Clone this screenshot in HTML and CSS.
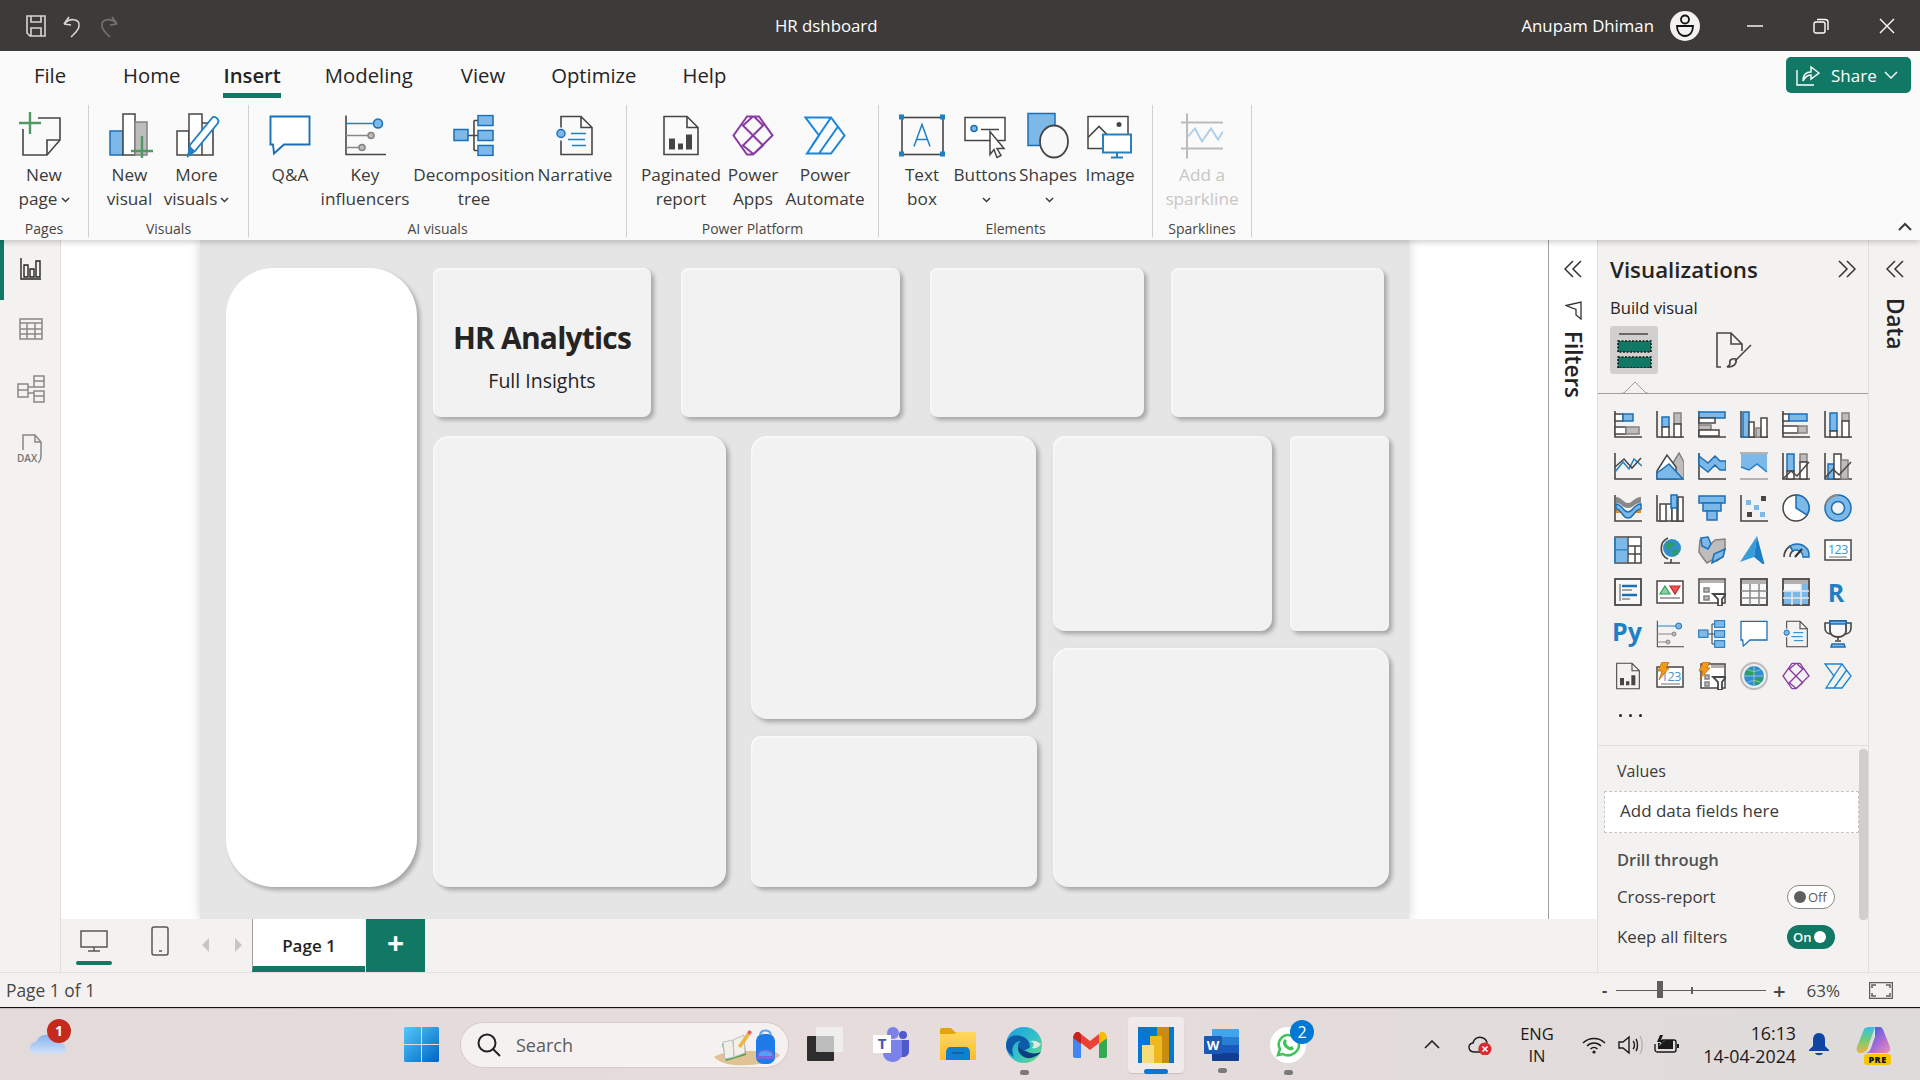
FILE: index.html
```html
<!DOCTYPE html>
<html lang="en">
<head>
  <meta charset="UTF-8">
  <title>HR dshboard - Power BI Desktop</title>
  <link rel="stylesheet" href="styles.css">
</head>
<body>

  <!-- Shared icons, sized 42 units -->
  <svg class="defs" aria-hidden="true">
    <defs>
      <linearGradient id="winGrad" x1="0" y1="0" x2="1" y2="1"><stop offset="0" stop-color="#52c9fb"/><stop offset="1" stop-color="#0064c4"/></linearGradient>
      <linearGradient id="edgeGrad" x1="0" y1="0" x2="1" y2="1"><stop offset="0" stop-color="#1b9de2"/><stop offset=".55" stop-color="#35c1c9"/><stop offset="1" stop-color="#6fe06a"/></linearGradient>
      <linearGradient id="folderGrad" x1="0" y1="0" x2="0" y2="1"><stop offset="0" stop-color="#ffd75e"/><stop offset="1" stop-color="#fbbd2e"/></linearGradient>
      <linearGradient id="cloudGrad" x1="0" y1="0" x2="0" y2="1"><stop offset="0" stop-color="#86b2ee"/><stop offset="1" stop-color="#d3e2f8"/></linearGradient>
      <linearGradient id="copGrad" x1="0" y1="0" x2="0" y2="1"><stop offset="0" stop-color="#35bfe8"/><stop offset=".5" stop-color="#72cc78"/><stop offset="1" stop-color="#efb43a"/></linearGradient>
      <linearGradient id="copGrad2" x1="0" y1="0" x2="1" y2="1"><stop offset="0" stop-color="#1a5fd6"/><stop offset=".55" stop-color="#a66ad8"/><stop offset="1" stop-color="#f58bbb"/></linearGradient>
      <symbol id="i-keyinf" viewBox="0 0 42 42">
        <path class="ax" d="M2 1V40H42"/>
        <path class="ln-b" d="M2 9H30"/><circle class="bb" cx="34" cy="9" r="4.5"/>
        <path class="ln-g" d="M2 21H24M2 33H15"/><circle class="gb" cx="27" cy="21" r="3"/><circle class="gb" cx="18" cy="33" r="3"/>
      </symbol>
      <symbol id="i-decomp" viewBox="0 0 42 42">
        <path class="ax" d="M15 21H25M21 6V36M21 6H25M21 36H25"/>
        <rect class="bb" x="1" y="15" width="14" height="11"/>
        <rect class="bb" x="25" y="1" width="15" height="10"/><rect class="bb" x="25" y="16" width="15" height="10"/><rect class="bb" x="25" y="31" width="15" height="10"/>
      </symbol>
      <symbol id="i-qa" viewBox="0 0 42 42">
        <path class="qa" d="M1.5 2H40.500V30H15L5 39 4 30H1.500Z"/>
      </symbol>
      <symbol id="i-narr" viewBox="0 0 42 42">
        <path class="ax" d="M7 13V2H27L38 13V40H7V26M27 2V13H38"/>
        <circle class="bb" cx="7" cy="19" r="4"/>
        <path class="ln-b" d="M17 19H32M14 25H31M18 31H32"/>
      </symbol>
      <symbol id="i-pag" viewBox="0 0 42 42">
        <path class="ax" d="M4 2H27L38 13V40H4ZM27 2V13H38"/>
        <path class="solid" d="M9 24H15V35H9ZM18 29H23V35H18ZM26 20H32V35H26Z"/>
      </symbol>
      <symbol id="i-apps" viewBox="0 0 42 42">
        <path class="apps" d="M15 2 1.500 21 15 40H21L40.500 21 27 2ZM21 2 11 11 31 31 21 40M22 40 11 31 31 11 22 2"/>
      </symbol>
      <symbol id="i-auto" viewBox="0 0 42 42">
        <path class="auto" d="M1.500 3H27L40.500 21 27 39H3L15 21ZM27 3 8 31M34 12 15 39"/>
      </symbol>
    </defs>
  </svg>

  <header class="titlebar">
    <div class="tb-left">
      <svg class="tb-save" width="20" height="22" viewBox="0 0 20 22"><path d="M1 1H19V21H4L1 18ZM5 1V7H15V1M5 21V13H15V21"/></svg>
      <svg class="tb-undo" width="18" height="24" viewBox="0 0 18 24"><path d="M1 10 6 3M1 10 8 11M1 10C7 3 17 5 16 12 16 16 12 19 8 23"/></svg>
      <svg class="tb-redo" width="18" height="24" viewBox="0 0 18 24"><path d="M17 10 12 3M17 10 10 11M17 10C11 3 1 5 2 12 2 16 6 19 10 23"/></svg>
    </div>
    <div class="tb-title">HR dshboard</div>
    <div class="tb-right">
      <span class="tb-user">Anupam Dhiman</span>
      <svg class="tb-avatar" width="30" height="30" viewBox="0 0 30 30"><circle class="av-bg" cx="15" cy="15" r="15"/><circle class="av-line" cx="15" cy="8.500" r="4"/><path class="av-line" d="M7 15H23C23 21 20 25 15 25 10 25 7 21 7 15Z"/></svg>
      <div class="win-btn"><svg width="16" height="16" viewBox="0 0 16 16"><path d="M0 8H16"/></svg></div>
      <div class="win-btn"><svg width="16" height="16" viewBox="0 0 16 16"><rect x="1" y="4" width="11" height="11" rx="2"/><path d="M4 1.500H12C14 1.500 15 2.500 15 4V12"/></svg></div>
      <div class="win-btn"><svg width="16" height="16" viewBox="0 0 16 16"><path d="M1 1 15 15M15 1 1 15"/></svg></div>
    </div>
  </header>

  <nav class="tabs">
    <span class="tab tab-file">File</span>
    <span class="tab tab-home">Home</span>
    <span class="tab active">Insert</span>
    <span class="tab tab-model">Modeling</span>
    <span class="tab">View</span>
    <span class="tab">Optimize</span>
    <span class="tab">Help</span>
    <button class="share">
      <svg width="24" height="22" viewBox="0 0 24 22"><path d="M1 6V21H18M7 17C7 11 10 8 15 8V3L23 9 15 15V11C11 11 9 13 7 17Z"/></svg>
      <span>Share</span>
      <svg width="14" height="8" viewBox="0 0 14 8"><path d="M1 1 7 7 13 1"/></svg>
    </button>
  </nav>

  <section class="ribbon">
    <div class="rb-group g-pages">
      <div class="rb-items">
        <div class="rb-item w-88">
          <svg class="rb-icon" width="44" height="47" viewBox="0 0 44 47"><path class="ax" d="M19 6H41V28L28 43H4V17"/><path class="ax" d="M41 28H28V43"/><path class="plus" d="M11 0V22M0 11H22"/></svg>
          <div class="rb-text">New<br>page<svg class="chev" width="9" height="6" viewBox="0 0 9 6"><path d="M1 1 4.500 4.500 8 1"/></svg></div>
        </div>
      </div>
      <div class="rb-label">Pages</div>
    </div>
    <div class="rb-group g-visuals">
      <div class="rb-items">
        <div class="rb-item w-67">
          <svg class="rb-icon shift-r" width="46" height="47" viewBox="0 0 46 47"><rect class="bb" x="1" y="19" width="13" height="24"/><rect class="wb" x="14" y="2" width="12" height="41"/><rect class="gb" x="26" y="10" width="12" height="33"/><path class="plus" d="M33 24V46M22 39H44"/></svg>
          <div class="rb-text">New<br>visual</div>
        </div>
        <div class="rb-item w-67">
          <svg class="rb-icon shift-r" width="46" height="47" viewBox="0 0 46 47"><rect class="wb" x="1" y="19" width="12" height="24"/><rect class="wb" x="13" y="2" width="13" height="41"/><path class="ax" d="M26 11H37V43H26"/><path class="pencil" d="M12 44 14 33 36 6C38 3 44 7 42 11L19 39Z"/><path class="solid-b" d="M12 44 14 34 19 39Z"/></svg>
          <div class="rb-text">More<br>visuals<svg class="chev" width="9" height="6" viewBox="0 0 9 6"><path d="M1 1 4.500 4.500 8 1"/></svg></div>
        </div>
      </div>
      <div class="rb-label">Visuals</div>
    </div>
    <div class="rb-group g-ai">
      <div class="rb-items">
        <div class="rb-item w-60"><svg class="rb-icon" width="42" height="42" viewBox="0 0 42 42"><use href="#i-qa"/></svg><div class="rb-text">Q&amp;A</div></div>
        <div class="rb-item w-90"><svg class="rb-icon" width="42" height="42" viewBox="0 0 42 42"><use href="#i-keyinf"/></svg><div class="rb-text">Key<br>influencers</div></div>
        <div class="rb-item w-128"><svg class="rb-icon" width="42" height="42" viewBox="0 0 42 42"><use href="#i-decomp"/></svg><div class="rb-text">Decomposition<br>tree</div></div>
        <div class="rb-item w-74"><svg class="rb-icon" width="42" height="42" viewBox="0 0 42 42"><use href="#i-narr"/></svg><div class="rb-text">Narrative</div></div>
      </div>
      <div class="rb-label">AI visuals</div>
    </div>
    <div class="rb-group g-power">
      <div class="rb-items">
        <div class="rb-item w-82"><svg class="rb-icon" width="42" height="42" viewBox="0 0 42 42"><use href="#i-pag"/></svg><div class="rb-text">Paginated<br>report</div></div>
        <div class="rb-item w-62"><svg class="rb-icon" width="42" height="42" viewBox="0 0 42 42"><use href="#i-apps"/></svg><div class="rb-text">Power<br>Apps</div></div>
        <div class="rb-item w-82"><svg class="rb-icon" width="42" height="42" viewBox="0 0 42 42"><use href="#i-auto"/></svg><div class="rb-text">Power<br>Automate</div></div>
      </div>
      <div class="rb-label">Power Platform</div>
    </div>
    <div class="rb-group g-elements">
      <div class="rb-items">
        <div class="rb-item w-64">
          <svg class="rb-icon" width="46" height="44" viewBox="0 0 46 44"><rect class="ax" x="3" y="4" width="41" height="37"/><path class="solid-b" d="M0 1H5V6H0ZM41 1H46V6H41ZM0 38H5V43H0ZM41 38H46V43H41Z"/><path class="ln-b" d="M15 33 23 11 31 33M18 26H28"/></svg>
          <div class="rb-text">Text<br>box</div>
        </div>
        <div class="rb-item w-62">
          <svg class="rb-icon" width="42" height="44" viewBox="0 0 42 44"><rect class="wb" x="1" y="4" width="40" height="23"/><circle class="bb" cx="10" cy="15" r="3"/><path class="ln-d" d="M17 16H35"/><path class="wb" d="M26 18V41L30 36 33 44 37 42 33 35H40Z"/></svg>
          <div class="rb-text">Buttons<br><svg class="chev" width="9" height="6" viewBox="0 0 9 6"><path d="M1 1 4.500 4.500 8 1"/></svg></div>
        </div>
        <div class="rb-item w-64">
          <svg class="rb-icon" width="42" height="46" viewBox="0 0 42 46"><rect class="bb" x="1" y="1" width="27" height="32"/><ellipse class="wb-thick" cx="27" cy="29" rx="14" ry="16"/></svg>
          <div class="rb-text">Shapes<br><svg class="chev" width="9" height="6" viewBox="0 0 9 6"><path d="M1 1 4.500 4.500 8 1"/></svg></div>
        </div>
        <div class="rb-item w-60">
          <svg class="rb-icon" width="46" height="46" viewBox="0 0 46 46"><rect class="wb" x="1" y="4" width="40" height="32"/><path class="ax" d="M1 25 12 14 22 24"/><circle class="solid" cx="32" cy="12" r="2.500"/><rect class="mon" x="16" y="22" width="28" height="18"/><path class="mon-line" d="M30 40V45M24 45H36"/></svg>
          <div class="rb-text">Image</div>
        </div>
      </div>
      <div class="rb-label">Elements</div>
    </div>
    <div class="rb-group g-spark">
      <div class="rb-items">
        <div class="rb-item w-98 disabled">
          <svg class="rb-icon" width="42" height="46" viewBox="0 0 42 46"><path class="spark-ax" d="M6 1V46M0 10H42M0 36H42"/><path class="spark-ln" d="M6 25 14 16 21 29 30 16 37 27 42 19"/></svg>
          <div class="rb-text">Add a<br>sparkline</div>
        </div>
      </div>
      <div class="rb-label">Sparklines</div>
    </div>
    <svg class="rb-collapse" width="14" height="9" viewBox="0 0 14 9"><path d="M1 8 7 2 13 8"/></svg>
  </section>

  <main class="main">
    <aside class="rail">
      <div class="rail-item current"><svg width="22" height="24" viewBox="0 0 22 24"><path class="rail-dark" d="M1 1V22H21M4 8H8V20H4ZM10 12H14V20H10ZM16 4H20V20H16Z"/></svg></div>
      <div class="rail-item table"><svg width="24" height="24" viewBox="0 0 24 24"><path class="rail-grey" d="M1 2H23V22H1ZM1 6H23M1 12H23M1 17H23M8 6V22M16 6V22"/></svg></div>
      <div class="rail-item model"><svg width="28" height="28" viewBox="0 0 28 28"><path class="rail-grey" d="M1 9H11V22H1ZM1 15H11M17 1H27V12H17ZM17 6H27M17 16H27V27H17ZM17 21H27M11 12H17M11 18H17"/></svg></div>
      <div class="rail-item model"><svg width="28" height="30" viewBox="0 0 28 30"><path class="rail-grey" d="M6 16V1H18L24 8V20C24 24 24 26 21 29M18 1V8H24"/><text class="dax" x="0" y="28">DAX</text></svg></div>
    </aside>

    <div class="canvas-col">
      <div class="canvas">
        <div class="report">
          <div class="card c-side"></div>
          <div class="report-right">
            <div class="row-top">
              <div class="card c-t1">
                <div class="kpi-title">HR Analytics</div>
                <div class="kpi-sub">Full Insights</div>
              </div>
              <div class="card c-t2"></div>
              <div class="card c-t3"></div>
              <div class="card c-t4"></div>
            </div>
            <div class="row-bottom">
              <div class="card c-big"></div>
              <div class="col-mid">
                <div class="card c-mid1"></div>
                <div class="card c-mid2"></div>
              </div>
              <div class="col-right">
                <div class="row-small">
                  <div class="card c-r1"></div>
                  <div class="card c-r2"></div>
                </div>
                <div class="card c-r3"></div>
              </div>
            </div>
          </div>
        </div>
      </div>
      <div class="page-tabs">
        <div class="view-btn selected"><svg width="28" height="22" viewBox="0 0 28 22"><path d="M1 1H27V17H1ZM14 17V21M8 21H20"/></svg></div>
        <div class="view-btn phone"><svg width="18" height="30" viewBox="0 0 18 30"><rect x="1" y="1" width="16" height="28" rx="2"/><path d="M8 25H11"/></svg></div>
        <svg class="page-arrow" width="7" height="14" viewBox="0 0 7 14"><path d="M7 0V14L0 7Z"/></svg>
        <svg class="page-arrow next" width="7" height="14" viewBox="0 0 7 14"><path d="M0 0V14L7 7Z"/></svg>
        <div class="page-tab">Page 1</div>
        <div class="page-add">+</div>
      </div>
    </div>

    <aside class="filters">
      <svg class="dbl" width="18" height="18" viewBox="0 0 18 18"><path d="M9 1 1 9 9 17M17 1 9 9 17 17"/></svg>
      <svg class="funnel" width="17" height="19" viewBox="0 0 17 19"><path d="M16 1V18L11 14V8.500L1 4.500Z"/></svg>
      <div class="vtext">Filters</div>
    </aside>

    <aside class="viz">
      <div class="viz-head">
        <span class="viz-title">Visualizations</span>
        <svg class="dbl" width="18" height="18" viewBox="0 0 18 18"><path d="M1 1 9 9 1 17M9 1 17 9 9 17"/></svg>
      </div>
      <div class="viz-sub">Build visual</div>
      <div class="viz-modes">
        <div class="mode on">
          <svg width="36" height="36" viewBox="0 0 36 36"><path class="ln-d" d="M3 2H32"/><rect class="mode-bar" x="2" y="9" width="33" height="11"/><rect class="mode-bar" x="2" y="25" width="33" height="11"/></svg>
        </div>
        <div class="mode">
          <svg width="38" height="38" viewBox="0 0 38 38"><path class="ax" d="M6 36H2V2H16L27 13V20M16 2V13H27"/><path class="ax" d="M36 14 20 30M12 36C19 36 22 33 21 28 17 27 14 29 15 32 15 34 14 35 12 36Z"/></svg>
        </div>
        <svg class="notch" width="26" height="13" viewBox="0 0 26 13"><path d="M0 12H2L13 1 24 12H26"/></svg>
      </div>

      <div class="viz-grid">
        <!-- row 1 -->
        <svg class="vi" viewBox="0 0 28 28"><path class="ax" d="M1 1V27H28"/><rect class="wb" x="1" y="4" width="8" height="7"/><rect class="bb" x="9" y="4" width="10" height="7"/><rect class="wb" x="1" y="17" width="11" height="7"/><rect class="gb" x="12" y="17" width="13" height="7"/></svg>
        <svg class="vi" viewBox="0 0 28 28"><path class="ax" d="M1 1V27H28"/><rect class="bb" x="6" y="7" width="7" height="10"/><rect class="wb" x="6" y="17" width="7" height="10"/><rect class="gb" x="18" y="3" width="7" height="11"/><rect class="wb" x="18" y="14" width="7" height="13"/></svg>
        <svg class="vi" viewBox="0 0 28 28"><path class="ax" d="M1 1V27H28"/><rect class="bb" x="1" y="2" width="26" height="6"/><rect class="wb" x="1" y="8" width="16" height="5"/><rect class="gb" x="1" y="15" width="12" height="5"/><rect class="wb" x="1" y="20" width="20" height="6"/></svg>
        <svg class="vi" viewBox="0 0 28 28"><path class="ax" d="M1 1V27H28"/><rect class="bb" x="3" y="2" width="6" height="25"/><rect class="wb" x="9" y="12" width="5" height="15"/><rect class="gb" x="16" y="18" width="5" height="9"/><rect class="wb" x="21" y="8" width="6" height="19"/></svg>
        <svg class="vi" viewBox="0 0 28 28"><path class="ax" d="M1 1V27H28"/><rect class="wb" x="1" y="4" width="6" height="7"/><rect class="bb" x="7" y="4" width="18" height="7"/><rect class="wb" x="1" y="16" width="15" height="7"/><rect class="gb" x="16" y="16" width="9" height="7"/></svg>
        <svg class="vi" viewBox="0 0 28 28"><path class="ax" d="M1 1V27H28"/><rect class="bb" x="6" y="3" width="7" height="18"/><rect class="wb" x="6" y="21" width="7" height="6"/><rect class="gb" x="18" y="3" width="7" height="8"/><rect class="wb" x="18" y="11" width="7" height="16"/></svg>
        <!-- row 2 -->
        <svg class="vi" viewBox="0 0 28 28"><path class="ax" d="M1 1V27H28"/><path class="ln-b" d="M1 20 9 10 15 17 20 7 28 14"/><path class="ln-d" d="M1 15 10 7 18 16 27 6"/></svg>
        <svg class="vi" viewBox="0 0 28 28"><path class="gb" d="M17 11 23 1 28 10V27H20Z"/><path class="wb" d="M1 19 11 3 20 15V27H1Z"/><path class="bb" d="M1 27V21L13 12 27 27Z"/></svg>
        <svg class="vi" viewBox="0 0 28 28"><path class="ax" d="M1 1V27H28"/><path class="bb" d="M1 4 10 11 17 4 22 9H28V18H22L17 13 10 20 1 13Z"/></svg>
        <svg class="vi" viewBox="0 0 28 28"><path class="gl" d="M0 1H28M0 27H28"/><path class="bb-flat" d="M1 2H27V20L17 12 9 18 1 15Z"/><path class="ln-b" d="M1 15 9 18 17 12 27 20"/></svg>
        <svg class="vi" viewBox="0 0 28 28"><path class="ax" d="M1 1V27H28"/><rect class="bb" x="5" y="2" width="7" height="17"/><rect class="wb" x="5" y="19" width="7" height="8"/><rect class="gb" x="18" y="2" width="7" height="8"/><rect class="wb" x="18" y="10" width="7" height="17"/><path class="ln-d" d="M1 27 9 19 15 24 27 10"/></svg>
        <svg class="vi" viewBox="0 0 28 28"><path class="ax" d="M1 1V27H28"/><rect class="bb" x="4" y="12" width="6" height="15"/><rect class="wb" x="10" y="2" width="7" height="25"/><rect class="gb" x="17" y="8" width="7" height="19"/><path class="ln-d" d="M1 26 9 17 15 23 27 10"/></svg>
        <!-- row 3 -->
        <svg class="vi" viewBox="0 0 28 28"><path class="ax" d="M1 1V27H28"/><path class="rib-g" d="M2 3C8 3 9 9 14 9S20 3 27 3V9C20 9 20 14 14 14S8 9 2 9Z"/><path class="rib-o" d="M2 12C5 12 7 16 9 19H2ZM27 12C24 12 22 16 19 19H27Z"/><path class="bb" d="M2 10C8 10 9 18 14 18S20 10 27 10V15C20 15 20 24 14 24S8 15 2 15Z"/></svg>
        <svg class="vi" viewBox="0 0 28 28"><path class="ax" d="M1 1V27H28"/><path class="wb" d="M4 27V10H10V27ZM10 10H16V27"/><rect class="wb" x="16" y="8" width="5" height="19"/><rect class="bb" x="15" y="1" width="6" height="13"/><rect class="wb" x="22" y="3" width="5" height="24"/></svg>
        <svg class="vi" viewBox="0 0 28 28"><rect class="bb" x="1" y="2" width="26" height="7"/><rect class="bb" x="5" y="9" width="18" height="8"/><rect class="bb" x="9" y="17" width="10" height="9"/></svg>
        <svg class="vi" viewBox="0 0 28 28"><path class="ax" d="M1 1V27H28"/><path class="solid" d="M21 2H26V7H21ZM7 18H12V23H7Z"/><path class="dots-b" d="M6 6H11V11H6ZM14 11H19V16H14ZM20 18H25V23H20Z"/></svg>
        <svg class="vi" viewBox="0 0 28 28"><circle class="wb" cx="14" cy="14" r="13"/><path class="bb" d="M14 14V1A13 13 0 0 1 25 21Z"/></svg>
        <svg class="vi" viewBox="0 0 28 28"><circle class="bb" cx="14" cy="14" r="13"/><circle class="donut-hole" cx="14" cy="14" r="6.500"/><path class="arc-g" d="M1.500 11A13 13 0 0 1 14 1"/></svg>
        <!-- row 4 -->
        <svg class="vi" viewBox="0 0 28 28"><rect class="wb" x="1" y="1" width="26" height="26"/><rect class="bb-flat" x="2" y="2" width="11" height="12"/><rect class="bb-flat" x="2" y="15" width="11" height="11"/><path class="ln-d" d="M14 1V27M14 10H27M21 10V27M14 18H27"/><path class="ln-b" d="M1 1V27M1 14H14"/></svg>
        <svg class="vi" viewBox="0 0 28 28"><path class="ax" d="M12 2C3 6 3 19 12 23M8 27H24M15 23V27"/><circle class="globe" cx="16" cy="12" r="9"/><path class="land" d="M10 8C13 5 17 6 19 8 17 11 14 10 14 14 11 14 10 11 10 8ZM16 15C19 13 22 13 23 14 22 18 19 20 17 20Z"/></svg>
        <svg class="vi" viewBox="0 0 28 28"><path class="gb" d="M2 4 9 3 13 8 17 4 27 3V13L25 20 19 25 14 24 9 27 5 22 1 16Z"/><path class="map-b" d="M3 2 10 1 13 8 10 13 4 10ZM14 27 16 18 27 13 25 21 19 24Z"/></svg>
        <svg class="vi" viewBox="0 0 28 28"><path class="arrow-a" d="M17 0 0 26 14 21Z"/><path class="arrow-b" d="M17 0 14 21 25 30Z"/></svg>
        <svg class="vi" viewBox="0 0 28 28"><path class="ax" d="M2 21C2 16 4 13 8 10L11 15C9 16 8 18 8 21"/><path class="bb" d="M8 10C14 6 22 8 26 14 27 16 27 19 27 21H21C21 17 18 14 14 14 13 14 12 14 11 15Z"/><path class="needle" d="M13 21 20 13"/></svg>
        <svg class="vi" viewBox="0 0 28 28"><rect class="wb" x="1" y="4" width="26" height="20"/><text class="t123" x="14" y="18">123</text><path class="gl" d="M5 21H23"/></svg>
        <!-- row 5 -->
        <svg class="vi" viewBox="0 0 28 28"><rect class="wb-thick" x="1" y="1" width="26" height="26"/><path class="ln-g" d="M6 6V23"/><path class="lines-b" d="M8 8H23M8 17H23"/><path class="ln-g" d="M8 12H18M8 21H16"/></svg>
        <svg class="vi" viewBox="0 0 28 28"><rect class="wb" x="1" y="3" width="26" height="22"/><path class="tri-g" d="M9 8 14 16H4Z"/><path class="tri-r" d="M14 8H24L19 16Z"/><path class="ln-g" d="M4 20H24"/></svg>
        <svg class="vi" viewBox="0 0 28 28"><rect class="wb" x="1" y="1" width="26" height="24"/><path class="head" d="M2 2H26V5H2Z"/><path class="gb" d="M6 10H11V14H6ZM6 18H11V22H6Z"/><path class="wb-thick" d="M15 16H28L24 21V28H20V21Z"/></svg>
        <svg class="vi" viewBox="0 0 28 28"><rect class="wb-thick" x="1" y="1" width="26" height="26"/><path class="head" d="M2 2H26V6H2Z"/><path class="ln-g" d="M1 13H27M1 20H27M10 6V27M19 6V27"/></svg>
        <svg class="vi" viewBox="0 0 28 28"><rect class="wb-thick" x="1" y="1" width="26" height="26"/><path class="head" d="M2 2H26V6H2Z"/><path class="bb-flat" d="M19 6H26V26H2V13H19Z"/><path class="ln-w" d="M1 13H27M1 20H27M10 13V27M19 6V27"/></svg>
        <div class="vi-text t-r">R</div>
        <!-- row 6 -->
        <div class="vi-text t-py">Py</div>
        <svg class="vi" viewBox="0 0 42 42"><use href="#i-keyinf"/></svg>
        <svg class="vi" viewBox="0 0 42 42"><use href="#i-decomp"/></svg>
        <svg class="vi" viewBox="0 0 42 42"><use href="#i-qa"/></svg>
        <svg class="vi" viewBox="0 0 42 42"><use href="#i-narr"/></svg>
        <svg class="vi" viewBox="0 0 28 28"><path class="ax" d="M6 3H1V8C1 12 4 14 7 14M22 3H27V8C27 12 24 14 21 14"/><path class="wb-thick" d="M6 1H22V11C22 15 18 17 14 17S6 15 6 11Z"/><path class="bb" d="M6 1H22V4H6ZM8 24H20L21 27H7Z"/><path class="ax" d="M14 17V20M11 21H17"/></svg>
        <!-- row 7 -->
        <svg class="vi" viewBox="0 0 42 42"><use href="#i-pag"/></svg>
        <svg class="vi" viewBox="0 0 28 28"><rect class="wb" x="1" y="5" width="26" height="20"/><text class="t123" x="15" y="19">123</text><path class="gl" d="M5 22H24"/><path class="bolt" d="M6 0H13L10 6H13L3 18 6 9H2Z"/></svg>
        <svg class="vi" viewBox="0 0 28 28"><rect class="wb" x="3" y="2" width="24" height="24"/><path class="head" d="M13 3H26V6H13Z"/><path class="gb" d="M7 13H11V17H7ZM7 20H11V24H7Z"/><path class="wb-thick" d="M15 15H28L24 20V28H20V20Z"/><path class="bolt" d="M5 0H12L9 6H12L2 17 5 9H1Z"/></svg>
        <svg class="vi" viewBox="0 0 28 28"><circle class="globe-ring" cx="14" cy="14" r="13"/><circle class="globe" cx="14" cy="14" r="10"/><path class="land" d="M6 9C10 6 14 7 17 10 14 14 10 13 6 14ZM13 18C17 15 21 16 23 15 22 20 18 23 15 23Z"/><path class="globe-grid" d="M4 14H24M14 4V24M7 7C11 10 17 10 21 7M7 21C11 18 17 18 21 21"/></svg>
        <svg class="vi" viewBox="0 0 42 42"><use href="#i-apps"/></svg>
        <svg class="vi" viewBox="0 0 42 42"><use href="#i-auto"/></svg>
      </div>
      <div class="viz-more"><i></i><i></i><i></i></div>

      <div class="wells">
        <div class="well-label">Values</div>
        <div class="well-box">Add data fields here</div>
        <div class="drill-head">Drill through</div>
        <div class="drill-row">
          <span>Cross-report</span>
          <div class="toggle off"><b></b><span>Off</span></div>
        </div>
        <div class="drill-row">
          <span>Keep all filters</span>
          <div class="toggle on"><span>On</span><b></b></div>
        </div>
        <div class="scrollbar"></div>
      </div>
    </aside>

    <aside class="data-pane">
      <svg class="dbl" width="18" height="18" viewBox="0 0 18 18"><path d="M9 1 1 9 9 17M17 1 9 9 17 17"/></svg>
      <div class="vtext">Data</div>
    </aside>
  </main>

  <footer class="status">
    <span class="status-page">Page 1 of 1</span>
    <div class="zoom">
      <span class="zoom-minus">-</span>
      <div class="slider"><i class="thumb"></i><i class="tick"></i></div>
      <span class="zoom-plus">+</span>
      <span class="zoom-pct">63%</span>
      <svg class="fit" width="24" height="17" viewBox="0 0 24 17"><rect x=".5" y=".5" width="23" height="16"/><path d="M3 6V3H7M17 3H21V6M21 11V14H17M7 14H3V11"/></svg>
    </div>
  </footer>

  <div class="taskbar">
    <div class="tk weather">
      <svg width="36" height="24" viewBox="0 0 36 24"><path fill="url(#cloudGrad)" d="M7 23C2 23 0 20 0 17 0 13 3 11 6 11 8 5 14 3 19 4 25 5 28 9 29 12 33 12 36 15 36 18 36 21 33 23 30 23Z"/></svg>
      <span class="badge red">1</span>
    </div>
    <svg class="tk win" width="35" height="35" viewBox="0 0 35 35"><path fill="url(#winGrad)" d="M1 0H17V17H0V1ZM18 0H34L35 1V17H18ZM0 18H17V35H1L0 34ZM18 18H35V34L34 35H18Z"/></svg>
    <div class="tk search">
      <svg class="search-ic" width="24" height="24" viewBox="0 0 24 24"><circle cx="10" cy="10" r="8.500"/><path d="M16 16 23 23"/></svg>
      <span class="search-text">Search</span>
      <svg class="search-art" width="66" height="39" viewBox="0 0 66 39">
        <path fill="#e2c195" d="M0 30C10 24 20 24 60 24L66 28C60 36 40 39 20 38 10 37 4 34 0 30Z"/>
        <path fill="#4ea24a" d="M8 17 30 10 32 28 12 34Z"/>
        <path fill="#f1efe8" stroke="#b9c1c9" d="M9 15 19 13 20 30 11 32ZM19 13 30 8 31 26 20 30Z"/>
        <path fill="#f2b544" d="M24 19 33 6 36 8 27 21Z"/>
        <path fill="#ee5a5a" d="M33 6 35 3 38 5 36 8Z"/>
        <rect fill="#1f7be8" x="42" y="7" width="19" height="30" rx="7"/>
        <path fill="none" stroke="#59a8f5" stroke-width="2" d="M46 8C47 2 56 2 57 8"/>
        <path fill="#7e62dd" d="M43 28C45 21 58 21 60 28V32H43Z"/>
        <path fill="#4ea2f5" d="M45 27C47 23 56 23 58 27V29H45Z"/>
      </svg>
    </div>
    <svg class="tk taskview" width="36" height="35" viewBox="0 0 36 35"><rect fill="#2e2d2d" x="0" y="9" width="27" height="25" rx="1"/><rect fill="#f4f4f4" fill-opacity=".72" x="9" y="0" width="27" height="25" rx="1"/></svg>
    <svg class="tk teams" width="36" height="35" viewBox="0 0 36 35"><circle fill="#7b83eb" cx="20" cy="6" r="6"/><circle fill="#5059c9" cx="30" cy="8" r="4"/><path fill="#5059c9" d="M24 13H36V24C36 28 33 30 30 30 27 30 24 28 24 24Z"/><path fill="#7b83eb" d="M10 13H29V27C29 31 25 35 20 35 14 35 10 31 10 26Z"/><rect fill="#fff" x="0" y="8" width="18" height="18"/><text class="t-team" x="9" y="22">T</text></svg>
    <svg class="tk folder" width="36" height="33" viewBox="0 0 36 33"><path fill="#e2a50b" d="M0 2C0 1 1 0 2 0H11L15 4H36V10H0Z"/><path fill="url(#folderGrad)" d="M0 6H14L17 4H36V32H0Z"/><path fill="#0f7fd0" d="M6 32V24C6 21 8 19 10 19H26C28 19 30 21 30 24V32Z"/><path fill="none" stroke="#0a5fa3" stroke-width="1.500" d="M12 25H24"/></svg>
    <div class="tk run edge">
      <svg width="36" height="36" viewBox="0 0 36 36"><circle fill="url(#edgeGrad)" cx="18" cy="18" r="18"/><path fill="#0d5ba8" d="M0 18C1 9 9 7 15 9 22 11 24 16 24 20 20 24 12 26 12 19 12 17 13 15 15 14 8 14 4 22 8 30 3 27 0 23 0 18Z"/><path fill="#0c3f80" d="M12 19C11 27 18 32 25 31 29 30 33 28 35 25 30 27 24 27 20 24 16 23 13 22 12 19Z"/><path fill="#f4eaea" d="M22 15C26 13 30 17 26 21 30 22 33 20 35 17 32 15 28 12 22 15Z" fill-opacity=".9"/></svg>
    </div>
    <svg class="tk gmail" width="34" height="26" viewBox="0 0 34 26"><path fill="#4285f4" d="M0 6V24C0 25 1 26 2 26H8V11Z"/><path fill="#34a853" d="M34 6V24C34 25 33 26 32 26H26V11Z"/><path fill="#ea4335" d="M8 11 17 18 26 11V2L17 9 8 2Z"/><path fill="#c5221f" d="M0 6 8 12V2L6 0C3-1 0 2 0 6Z"/><path fill="#fbbc04" d="M34 6 26 12V2L28 0C31-1 34 2 34 6Z"/></svg>
    <div class="tk pbi-tile">
      <svg width="36" height="36" viewBox="0 0 36 36"><rect fill="#0078d4" width="36" height="36"/><rect fill="#c98d0e" x="19" width="12" height="36"/><rect fill="#eeb91f" x="12" y="9" width="12" height="27"/><rect fill="#f6dd7a" x="4" y="18" width="12" height="18"/></svg>
      <i class="pbi-mark"></i>
    </div>
    <div class="tk run word">
      <svg width="35" height="32" viewBox="0 0 35 32"><rect fill="#41a5ee" x="8" width="27" height="8" rx="1"/><rect fill="#2b7cd3" x="8" y="8" width="27" height="8"/><rect fill="#185abd" x="8" y="16" width="27" height="8"/><rect fill="#103f91" x="8" y="24" width="27" height="8" rx="1"/><rect fill="#1c59b5" y="7" width="18" height="18" rx="1"/><text class="t-word" x="9" y="21">W</text></svg>
    </div>
    <div class="tk run whatsapp">
      <svg width="36" height="36" viewBox="0 0 36 36"><circle fill="#fff" cx="18" cy="18" r="18"/><path fill="none" stroke="#3fc45a" stroke-width="2.500" d="M8 28 10 22C6 15 12 8 18 8 25 8 29 13 29 18 29 25 20 31 13 27Z"/><path fill="#3fc45a" d="M14 13C12 15 13 19 16 21 19 24 22 24 24 22L22 19 20 20C18 19 17 18 16 16L17 14 15 12Z"/></svg>
      <span class="badge blue">2</span>
    </div>

    <svg class="tk tray-caret" width="16" height="9" viewBox="0 0 16 9"><path d="M1 8 8 1 15 8"/></svg>
    <div class="tk tray-cloud">
      <svg width="24" height="20" viewBox="0 0 24 20"><path class="tray-line" fill="#8a8886" d="M6 17C2 17 1 14 1 12 1 9 4 8 5 8 6 3 11 1 15 3 18 4 19 7 19 9H14C11 11 11 14 12 17Z"/><circle fill="#d92b2f" cx="17" cy="14" r="6.500"/><path stroke="#fff" stroke-width="1.600" d="M14.500 11.500 19.500 16.500M19.500 11.500 14.500 16.500"/></svg>
    </div>
    <div class="tk tray-lang">ENG<br>IN</div>
    <svg class="tk tray-wifi" width="24" height="18" viewBox="0 0 24 18"><path class="tray-line" d="M1 7C7 1 17 1 23 7M5 10C9 6 15 6 19 10M8.500 13C10.500 11 13.500 11 15.500 13"/><circle fill="#1a1a1a" cx="12" cy="16" r="1.600"/></svg>
    <svg class="tk tray-sound" width="26" height="20" viewBox="0 0 26 20"><path class="tray-line" d="M1 7H5L11 2V18L5 13H1ZM15 6C17 8 17 12 15 14M18 4C20 7 20 13 18 16"/><path fill="none" stroke="#b5b2b0" stroke-width="1.400" d="M22 1C25 6 25 14 22 19"/></svg>
    <svg class="tk tray-batt" width="25" height="20" viewBox="0 0 25 20"><path class="tray-line" d="M8 5H20C21 5 22 6 22 7V15C22 16 21 17 20 17H3C2 17 1 16 1 15V9"/><path fill="#1a1a1a" d="M4 8H8L12 5H19V14H4ZM23 9H25V13H23ZM6 0 3 7H7L5 11 11 5H7L9 0Z"/></svg>
    <div class="tk tray-clock">16:13<br>14-04-2024</div>
    <svg class="tk tray-bell" width="20" height="24" viewBox="0 0 20 24"><path fill="#0f46a3" d="M10 0C14 0 16 3 16 7V13L20 17V18H0V17L4 13V7C4 3 6 0 10 0ZM6 20H14C13 23 7 23 6 20Z"/></svg>
    <div class="tk copilot">
      <svg width="35" height="36" viewBox="0 0 35 36"><path fill="url(#copGrad)" d="M8 2C10 0 12 0 19 0L12 20C11 24 8 26 4 26 1 26 0 23 1 20Z"/><path fill="url(#copGrad2)" d="M19 0H24C26 0 27 2 28 5L34 20C35 23 33 26 30 26H10C15 25 15 20 19 10Z"/></svg>
      <span class="pre">PRE</span>
    </div>
  </div>

</body>
</html>
```

FILE: styles.css
```css
* {
  box-sizing: border-box;
  margin: 0;
  padding: 0;
}
html, body {
  width: 1920px;
  height: 1080px;
  overflow: hidden;
}
body {
  font-family: "Open Sans", "Noto Sans", sans-serif;
  color: #252423;
  background-color: #f3f2f1;
}
svg {
  display: block;
  flex: none;
}
.defs {
  position: absolute;
  width: 0;
  height: 0;
}

/* Title bar */
.titlebar {
  height: 51px;
  display: flex;
  align-items: center;
  background-color: #3d3b39;
  color: #fff;
}
.tb-left {
  width: 775px;
  display: flex;
  align-items: center;
  padding-left: 26px;
}
.tb-left svg {
  fill: none;
  stroke-width: 1.6;
}
.tb-save { stroke: #d8d6d4; }
.tb-undo { stroke: #d8d6d4; margin-left: 17px; }
.tb-redo { stroke: #76736f; margin-left: 19px; }
.tb-title {
  font-size: 16.8px;
}
.tb-right {
  margin-left: auto;
  display: flex;
  align-items: center;
}
.tb-user {
  font-size: 16.8px;
  margin-right: 16px;
}
.tb-avatar {
  margin-right: 22px;
}
.av-bg { fill: #f3f2f1; }
.av-line {
  fill: none;
  stroke: #111;
  stroke-width: 1.8;
}
.win-btn {
  width: 66px;
  display: flex;
  justify-content: center;
}
.win-btn svg {
  fill: none;
  stroke: #fff;
  stroke-width: 1.4;
}

/* Tabs */
.tabs {
  height: 54px;
  display: flex;
  background-color: #fafafa;
  padding-left: 34px;
  position: relative;
  z-index: 3;
}
.tab {
  font-size: 20.3px;
  line-height: 48px;
  height: 47px;
  margin-right: 46px;
  color: #252423;
}
.tab-file {
  margin-right: 57px;
}
.tab-home {
  margin-right: 43px;
}
.tab-model {
  margin-right: 48px;
}
.tab.active {
  font-weight: 600;
  margin-right: 44px;
  border-bottom: 5px solid #117865;
}
.share {
  margin: 6px 9px 0 auto;
  width: 125px;
  height: 36px;
  display: flex;
  align-items: center;
  gap: 11px;
  padding-left: 10px;
  border: none;
  border-radius: 5px;
  background-color: #117865;
  color: #fff;
  font-family: inherit;
  font-size: 17px;
}
.share span {
  margin-right: -4px;
}
.share svg {
  fill: none;
  stroke: #fff;
  stroke-width: 1.4;
}

/* Ribbon */
.ribbon {
  height: 135px;
  display: flex;
  background-color: #fafafa;
  box-shadow: 0 2px 6px rgba(0, 0, 0, 0.2);
  position: relative;
  z-index: 2;
}
.rb-group {
  height: 132px;
  display: flex;
  flex-direction: column;
  border-right: 1px solid #d2d0ce;
}
.g-pages { width: 89px; }
.g-visuals { width: 160px; }
.g-ai { width: 378px; }
.g-power { width: 252px; }
.g-elements { width: 274px; }
.g-spark { width: 99px; }
.rb-items {
  display: flex;
  padding-top: 7px;
}
.g-visuals .rb-items { padding-left: 7px; }
.g-ai .rb-items { padding-left: 11px; }
.g-power .rb-items { padding-left: 13px; }
.g-elements .rb-items { padding-left: 11px; }
.rb-item {
  display: flex;
  flex-direction: column;
  align-items: center;
  white-space: nowrap;
}
.w-60 { width: 60px; }
.w-62 { width: 62px; }
.w-64 { width: 64px; }
.w-67 { width: 67px; }
.w-74 { width: 74px; }
.w-82 { width: 82px; }
.w-88 { width: 88px; }
.w-90 { width: 90px; }
.w-98 { width: 98px; }
.w-128 { width: 128px; }
.rb-icon {
  height: 47px;
  margin-bottom: 4px;
}
.g-pages .rb-icon {
  margin-right: 6px;
}
.rb-icon.shift-r {
  margin-left: 4px;
}
.rb-text {
  font-size: 17.2px;
  line-height: 24px;
  text-align: center;
  color: #3b3a39;
}
.disabled .rb-text {
  color: #c8c6c4;
}
.chev {
  display: inline-block;
  margin-left: 3px;
  vertical-align: 2px;
  fill: none;
  stroke: #3b3a39;
  stroke-width: 1.5;
}
.rb-label {
  margin-top: auto;
  height: 17px;
  font-size: 14px;
  line-height: 18px;
  text-align: center;
  color: #484644;
}
.rb-collapse {
  margin: 117px 0 0 646px;
  fill: none;
  stroke: #3b3a39;
  stroke-width: 2;
}

/* Icon paint */
.ax { fill: none; stroke: #484644; stroke-width: 1.600; }
.wb { fill: #fff; stroke: #484644; stroke-width: 1.500; }
.wb-thick { fill: #f8f8f8; stroke: #484644; stroke-width: 1.800; }
.bb { fill: #7db9e8; stroke: #1b6fb6; stroke-width: 1.500; }
.bb-flat { fill: #7db9e8; stroke: none; }
.gb { fill: #bfbdbb; stroke: #858381; stroke-width: 1.500; }
.ln-b { fill: none; stroke: #1f80c6; stroke-width: 1.500; }
.ln-d { fill: none; stroke: #484644; stroke-width: 1.500; }
.ln-g { fill: none; stroke: #8a8886; stroke-width: 1.500; }
.ln-w { fill: none; stroke: #e8e8e8; stroke-width: 1.500; }
.gl { fill: none; stroke: #a19f9d; stroke-width: 1.500; }
.solid { fill: #484644; }
.solid-b { fill: #1f80c6; }
.qa { fill: #fff; stroke: #1b6fb6; stroke-width: 1.900; }
.apps { fill: none; stroke: #8a3aa3; stroke-width: 2; }
.auto { fill: none; stroke: #1a86d8; stroke-width: 2; }
.plus { fill: none; stroke: #4f9a63; stroke-width: 2.400; }
.pencil { fill: #fff; stroke: #1f80c6; stroke-width: 1.800; }
.mon { fill: #fff; stroke: #2a7fb8; stroke-width: 2; }
.mon-line { fill: none; stroke: #2a7fb8; stroke-width: 2; }
.spark-ax { fill: none; stroke: #bdbbb9; stroke-width: 2; }
.spark-ln { fill: none; stroke: #a9cfe6; stroke-width: 1.800; }
.lines-b { fill: none; stroke: #1b6fb6; stroke-width: 2.400; }
.rib-g { fill: #8a8886; stroke: none; }
.rib-o { fill: #e8891a; stroke: none; }
.dots-b { fill: #7db9e8; }
.donut-hole { fill: #f3f2f1; stroke: #1b6fb6; stroke-width: 1.500; }
.arc-g { fill: none; stroke: #8a8886; stroke-width: 2; }
.globe { fill: #2f8fce; }
.land { fill: #2e9e5b; }
.globe-ring { fill: #eee; stroke: #bdbbb9; stroke-width: 2; }
.globe-grid { fill: none; stroke: #bcd3e6; stroke-width: .7; }
.map-b { fill: #7db9e8; stroke: #1b6fb6; stroke-width: 1.500; }
.arrow-a { fill: #3a9bd9; }
.arrow-b { fill: #1c7ec8; }
.needle { stroke: #333; stroke-width: 2; }
.tri-g { fill: #8fd19e; stroke: #2e9e5b; stroke-width: 1.200; }
.tri-r { fill: #ef5350; stroke: #c62828; stroke-width: 1.200; }
.head { fill: #b3b0ad; }
.bolt { fill: #f29a1f; stroke: #b96a05; stroke-width: .8; }
.t123 {
  font-family: "Open Sans", sans-serif;
  font-size: 12.5px;
  letter-spacing: -.4px;
  text-anchor: middle;
  fill: #3a94d6;
}
.vi-text {
  height: 28px;
  width: 28px;
  line-height: 28px;
  font-size: 25px;
  font-weight: 700;
  color: #1f80c6;
  white-space: nowrap;
}
.t-r {
  text-align: center;
  margin-left: -2px;
}
.t-py {
  margin: -3px 0 0 -2px;
}

/* Main area */
.main {
  height: 732px;
  display: flex;
  background-color: #f3f2f1;
}
.rail {
  width: 61px;
  flex: none;
  border-right: 1px solid #e1dfdd;
  background-color: #f3f2f1;
}
.rail-item {
  height: 60px;
  display: flex;
  align-items: center;
  padding-left: 20px;
}
.rail-item svg {
  margin-top: -2px;
}
.rail-item.current {
  border-left: 4px solid #117865;
  padding-left: 16px;
}
.rail-item.table { padding-left: 19px; }
.rail-item.model { padding-left: 17px; }
.rail-dark {
  fill: none;
  stroke: #252423;
  stroke-width: 1.400;
}
.rail-grey {
  fill: none;
  stroke: #8a8886;
  stroke-width: 1.500;
}
.dax {
  font-family: "Open Sans", sans-serif;
  font-size: 10px;
  font-weight: 600;
  fill: #757472;
}

.canvas-col {
  width: 1487px;
  flex: none;
  display: flex;
  flex-direction: column;
}
.canvas {
  height: 679px;
  background-color: #fff;
  display: flex;
  justify-content: center;
  overflow: hidden;
}
.report {
  width: 1209px;
  display: flex;
  padding: 28px 0 32px 26px;
  background-color: #e5e5e5;
  box-shadow: 0 0 10px rgba(0, 0, 0, 0.18);
}
.card {
  flex: none;
  background-color: #f2f2f2;
  box-shadow: 3px 3px 4px rgba(0, 0, 0, 0.28), inset 1px 1px 2px rgba(255, 255, 255, 0.8);
}
.c-side {
  width: 191px;
  height: 619px;
  margin-right: 16px;
  background-color: #fff;
  border-radius: 48px;
}
.report-right {
  display: flex;
  flex-direction: column;
}
.row-top {
  display: flex;
}
.row-top .card {
  height: 149px;
  border-radius: 8px;
}
.c-t1 { width: 218px; margin-right: 30px; }
.c-t2 { width: 219px; margin-right: 30px; }
.c-t3 { width: 214px; margin-right: 27px; }
.c-t4 { width: 213px; }
.c-t1 {
  display: flex;
  flex-direction: column;
  align-items: center;
  padding-top: 51px;
}
.kpi-title {
  font-size: 30px;
  line-height: 38px;
  font-weight: 700;
  letter-spacing: -.8px;
}
.kpi-sub {
  font-size: 19.5px;
  line-height: 26px;
  margin-top: 11px;
}
.row-bottom {
  display: flex;
  margin-top: 19px;
}
.c-big {
  width: 293px;
  height: 451px;
  margin-right: 25px;
  border-radius: 16px;
}
.col-mid {
  width: 286px;
  margin-right: 16px;
  display: flex;
  flex-direction: column;
  gap: 17px;
}
.c-mid1 {
  height: 283px;
  border-radius: 16px;
  margin-right: 1px;
}
.c-mid2 {
  height: 151px;
  border-radius: 10px;
}
.col-right {
  width: 336px;
  display: flex;
  flex-direction: column;
  gap: 17px;
}
.row-small {
  display: flex;
  gap: 18px;
}
.c-r1 {
  width: 219px;
  height: 195px;
  border-radius: 12px;
}
.c-r2 {
  width: 99px;
  height: 195px;
  border-radius: 6px;
}
.c-r3 {
  height: 239px;
  border-radius: 16px;
}

/* Page tabs */
.page-tabs {
  height: 53px;
  display: flex;
  background-color: #f3f2f1;
}
.view-btn {
  height: 53px;
  display: flex;
  justify-content: center;
  padding-top: 11px;
  position: relative;
}
.view-btn svg {
  fill: none;
  stroke: #5a5856;
  stroke-width: 1.500;
}
.view-btn.selected {
  width: 36px;
  margin-left: 15px;
}
.view-btn.selected::after {
  content: "";
  position: absolute;
  left: 0;
  right: 0;
  top: 42px;
  height: 4px;
  border-radius: 2px;
  background-color: #117865;
}
.view-btn.phone {
  width: 18px;
  margin-left: 39px;
  padding-top: 7px;
}
.page-arrow {
  margin: 19px 0 0 33px;
  fill: #c8c6c4;
}
.page-arrow.next {
  margin-left: 26px;
}
.page-tab {
  margin-left: 10px;
  width: 113px;
  height: 53px;
  border-left: 1px solid #a19f9d;
  border-bottom: 6px solid #117865;
  background-color: #fff;
  font-size: 17px;
  font-weight: 600;
  line-height: 54px;
  text-align: center;
}
.page-add {
  margin-left: 1px;
  width: 59px;
  height: 53px;
  background-color: #117865;
  color: #fff;
  font-size: 30px;
  font-weight: 700;
  line-height: 48px;
  text-align: center;
}

/* Filters and data side panes */
.filters {
  width: 49px;
  flex: none;
  background-color: #fff;
  border-left: 1px solid #a19f9d;
  height: 679px;
  display: flex;
  flex-direction: column;
  align-items: center;
  padding-top: 20px;
}
.dbl {
  fill: none;
  stroke: #323130;
  stroke-width: 1.500;
}
.funnel {
  margin-top: 23px;
  fill: none;
  stroke: #323130;
  stroke-width: 1.300;
}
.vtext {
  writing-mode: vertical-rl;
  font-size: 22.5px;
  font-weight: 600;
  line-height: 28px;
}
.filters .vtext {
  margin-top: 11px;
}
.data-pane {
  flex: 1;
  display: flex;
  flex-direction: column;
  align-items: center;
  padding-top: 20px;
}
.data-pane .vtext {
  margin-top: 20px;
}

/* Visualizations pane */
.viz {
  width: 272px;
  flex: none;
  border-left: 1px solid #e1dfdd;
  border-right: 1px solid #e1dfdd;
  display: flex;
  flex-direction: column;
  position: relative;
}
.viz-head {
  height: 58px;
  display: flex;
  align-items: center;
  justify-content: space-between;
  padding: 0 12px 0 12px;
}
.viz-title {
  font-size: 22.3px;
  font-weight: 600;
}
.viz-sub {
  height: 20px;
  padding-left: 12px;
  font-size: 16.6px;
  font-weight: 500;
  line-height: 20px;
}
.viz-modes {
  height: 68px;
  margin-top: 8px;
  border-bottom: 1px solid #a19f9d;
  display: flex;
  padding-left: 12px;
  position: relative;
}
.mode {
  width: 48px;
  height: 48px;
  display: flex;
  align-items: center;
  justify-content: center;
  border-radius: 3px;
}
.mode.on {
  background-color: #d2d0ce;
}
.mode + .mode {
  margin-left: 52px;
}
.mode-bar {
  fill: #117865;
  stroke: #1a1a1a;
  stroke-width: 1.600;
  stroke-dasharray: 2 1.500;
}
.notch {
  position: absolute;
  left: 24px;
  bottom: -1px;
  fill: #f3f2f1;
  stroke: #a19f9d;
  stroke-width: 1;
}
.viz-grid {
  margin: 16px 0 0 16px;
  display: grid;
  grid-template-columns: repeat(6, 42px);
  grid-auto-rows: 42px;
}
.vi {
  width: 28px;
  height: 28px;
}
.viz-more {
  height: 42px;
  display: flex;
  gap: 7px;
  padding: 7px 0 0 21px;
  border-bottom: 1px solid #e1dfdd;
}
.viz-more i {
  width: 3px;
  height: 3px;
  margin-top: 3px;
  border-radius: 50%;
  background-color: #252423;
}
.wells {
  flex: 1;
  position: relative;
  color: #3b3a39;
}
.well-label {
  padding: 15px 0 0 19px;
  font-size: 16px;
  line-height: 21px;
}
.well-box {
  margin: 9px 9px 0 6px;
  height: 42px;
  padding-left: 15px;
  border: 1px dashed #c8c6c4;
  background-color: #fff;
  font-size: 17px;
  line-height: 38px;
}
.drill-head {
  margin-top: 16px;
  padding-left: 19px;
  font-size: 16.5px;
  font-weight: 600;
  line-height: 22px;
  color: #505050;
}
.drill-row {
  display: flex;
  align-items: center;
  justify-content: space-between;
  height: 24px;
  margin-top: 14px;
  padding: 0 33px 0 19px;
  font-size: 16.8px;
}
.drill-head + .drill-row {
  margin-top: 14px;
}
.drill-row + .drill-row {
  margin-top: 16px;
}
.drill-row > span {
  margin-top: -2px;
}
.toggle {
  width: 48px;
  height: 24px;
  border-radius: 12px;
  display: flex;
  align-items: center;
  gap: 2px;
  padding: 0 6px;
  font-size: 13px;
}
.toggle b {
  width: 12px;
  height: 12px;
  border-radius: 50%;
}
.toggle.off {
  border: 1px solid #8a8886;
  background-color: #fff;
  color: #605e5c;
}
.toggle.off b {
  background-color: #605e5c;
}
.toggle.on {
  background-color: #117865;
  color: #fff;
  font-weight: 600;
}
.toggle.on b {
  background-color: #fff;
}
.scrollbar {
  position: absolute;
  right: 0;
  top: 3px;
  width: 9px;
  height: 171px;
  border-radius: 4px;
  background-color: #d0cfcd;
}

/* Status bar */
.status {
  height: 36px;
  display: flex;
  align-items: center;
  justify-content: space-between;
  padding-left: 6px;
  border-top: 1px solid #e1dfdd;
  border-bottom: 1px solid #111;
  background-color: #f3f2f1;
  font-size: 17.4px;
  color: #484644;
}
.zoom {
  display: flex;
  align-items: center;
  padding-right: 27px;
}
.zoom-minus {
  width: 14px;
  font-size: 16px;
  font-weight: 700;
}
.slider {
  width: 150px;
  height: 1px;
  background-color: #605e5c;
  position: relative;
}
.thumb {
  position: absolute;
  left: 41px;
  top: -9px;
  width: 6px;
  height: 17px;
  background-color: #605e5c;
}
.tick {
  position: absolute;
  left: 75px;
  top: -3px;
  width: 2px;
  height: 7px;
  background-color: #605e5c;
}
.zoom-plus {
  margin-left: 7px;
  font-size: 22px;
  font-weight: 600;
  line-height: 22px;
}
.zoom-pct {
  margin-left: 21px;
  font-size: 17px;
}
.fit {
  margin-left: 29px;
  fill: none;
  stroke: #605e5c;
  stroke-width: 1.500;
}

/* Windows taskbar */
.taskbar {
  height: 72px;
  display: flex;
  align-items: center;
  background: linear-gradient(90deg, #e3dada, #e6dcdb 50%, #dfdbdb);
  border-top: 1px solid #c5bebd;
  color: #1a1a1a;
}
.tk {
  flex: none;
  position: relative;
}
.weather { margin-left: 30px; width: 36px; margin-top: -3px; }
.badge {
  position: absolute;
  width: 24px;
  height: 24px;
  border-radius: 50%;
  color: #fff;
  text-align: center;
  line-height: 24px;
}
.badge.red {
  left: 17px;
  top: -12px;
  background-color: #c42b1c;
  font-size: 14px;
  font-weight: 700;
}
.badge.blue {
  left: 20px;
  top: -7px;
  background-color: #0078d4;
  font-size: 16px;
}
.win { margin-left: 338px; }
.search {
  margin-left: 22px;
  width: 327px;
  height: 44px;
  display: flex;
  align-items: center;
  padding-left: 16px;
  border-radius: 22px;
  background-color: #f5f1f0;
  box-shadow: 0 0 0 1px #d5cccb;
}
.search-ic {
  fill: none;
  stroke: #222;
  stroke-width: 2;
}
.search-text {
  margin-left: 15px;
  font-size: 18px;
  color: #5c5c5c;
}
.search-art {
  margin: 4px 8px 0 auto;
}
.taskview { margin-left: 19px; }
.teams { margin-left: 30px; }
.t-team {
  font-family: "Open Sans", sans-serif;
  font-size: 15px;
  font-weight: 700;
  text-anchor: middle;
  fill: #4b53bc;
}
.folder { margin-left: 31px; }
.edge { margin-left: 30px; }
.gmail { margin-left: 31px; }
.pbi-tile {
  margin-left: 21px;
  width: 56px;
  height: 56px;
  padding: 10px;
  border-radius: 4px;
  background-color: #f1eaea;
  box-shadow: 0 1px 1px rgba(0, 0, 0, 0.12);
}
.pbi-mark {
  position: absolute;
  left: 16px;
  bottom: -1px;
  width: 24px;
  height: 5px;
  border-radius: 3px;
  background-color: #0078d4;
}
.run::after {
  content: "";
  position: absolute;
  left: 50%;
  bottom: -12px;
  width: 9px;
  height: 5px;
  margin-left: -4px;
  border-radius: 3px;
  background-color: #7a7a7a;
}
.word { margin-left: 20px; }
.t-word {
  font-family: "Open Sans", sans-serif;
  font-size: 13px;
  font-weight: 700;
  text-anchor: middle;
  fill: #fff;
}
.whatsapp { margin-left: 31px; }
.tray-caret {
  margin-left: 118px;
  fill: none;
  stroke: #1a1a1a;
  stroke-width: 1.500;
}
.tray-cloud { margin-left: 28px; }
.tray-line {
  fill: none;
  stroke: #1a1a1a;
  stroke-width: 1.400;
}
.tray-lang {
  margin-left: 24px;
  width: 42px;
  font-size: 16.5px;
  line-height: 22px;
  text-align: center;
}
.tray-wifi { margin-left: 24px; }
.tray-sound { margin-left: 12px; }
.tray-batt { margin-left: 10px; }
.tray-clock {
  width: 117px;
  font-size: 17.8px;
  line-height: 23px;
  text-align: right;
}
.tray-bell { margin-left: 13px; }
.copilot { margin-left: 27px; width: 35px; }
.pre {
  position: absolute;
  left: 8px;
  bottom: -2px;
  width: 27px;
  height: 11px;
  border-radius: 3px;
  background-color: #f7c600;
  font-size: 9px;
  font-weight: 800;
  line-height: 11px;
  text-align: center;
  letter-spacing: .5px;
  color: #111;
}
```
